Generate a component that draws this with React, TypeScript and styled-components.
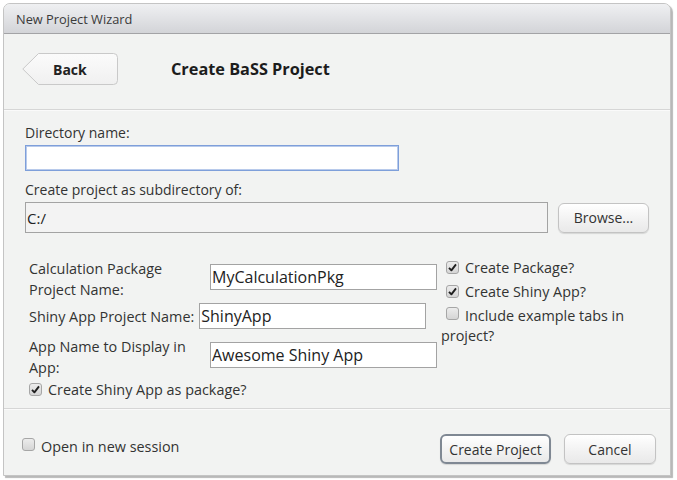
import React from "react";
import styled, { createGlobalStyle } from "styled-components";

const GlobalStyle = createGlobalStyle`
  html, body {
    margin: 0;
    padding: 0;
    background: #ffffff;
  }
  body {
    font-family: "Open Sans", "Noto Sans", sans-serif;
    color: #333;
  }
`;

const Page = styled.div`
  width: 677px;
  height: 480px;
  padding: 3px 0 0 3px;
  box-sizing: border-box;
`;

const Window = styled.div`
  width: 668px;
  height: 473px;
  display: flex;
  flex-direction: column;
  background: #f2f3f2;
  border: 1px solid #c4c4c4;
  border-radius: 7px 7px 0 0;
  box-shadow: 2px 2px 1px rgba(0, 0, 0, 0.28);
  box-sizing: border-box;
  overflow: hidden;
`;

const TitleBar = styled.div`
  height: 30px;
  flex: none;
  display: flex;
  align-items: center;
  padding-left: 12px;
  font-size: 12.8px;
  color: #3a3a3a;
  background: linear-gradient(#eff0f2, #d3d4d8);
  border-bottom: 1px solid #a3a3a6;
  box-sizing: border-box;
`;

const Header = styled.div`
  height: 76px;
  flex: none;
  display: flex;
  align-items: center;
  gap: 53px;
  padding: 0 0 5px 18px;
  border-bottom: 1px solid #d6d6d6;
  box-shadow: 0 1px 0 #fafafa;
  box-sizing: border-box;
`;

const BackButton = styled.button`
  position: relative;
  width: 96px;
  height: 32px;
  border: none;
  background: transparent;
  font-family: inherit;
  font-size: 14px;
  font-weight: 700;
  color: #222;
  text-align: left;
  padding: 0 0 0 31px;
  cursor: pointer;

  svg {
    position: absolute;
    left: 0;
    top: 0;
  }

  span {
    position: relative;
  }
`;

const Heading = styled.h1`
  margin: 0;
  font-size: 16.3px;
  font-weight: 700;
  color: #1c1c1c;
`;

const Content = styled.div`
  flex: none;
  height: 299px;
  padding: 14px 20px 0 21px;
  border-bottom: 1px solid #d6d6d6;
  box-shadow: 0 1px 0 #fafafa;
  box-sizing: border-box;
`;

const FieldLabel = styled.div`
  font-size: 14px;
  line-height: 18px;
  color: #333;
`;

const DirInput = styled.input`
  display: block;
  width: 374px;
  height: 26px;
  margin: 3px 0 10px;
  box-sizing: border-box;
  border: 1px solid #7e9fda;
  box-shadow: 0 0 0 1px rgba(126, 159, 218, 0.55) inset;
  background: #fff;
  outline: none;
`;

const PathRow = styled.div`
  display: flex;
  align-items: center;
  gap: 10px;
  margin-top: 3px;
`;

const PathBox = styled.div`
  width: 523px;
  height: 31px;
  box-sizing: border-box;
  border: 1px solid #a3a3a3;
  background: #f3f3f3;
  display: flex;
  align-items: center;
  padding-left: 1px;
  font-size: 15px;
  color: #222;
`;

const PushButton = styled.button<{ $primary?: boolean; $width: number }>`
  width: ${(p) => p.$width}px;
  height: 30px;
  border-radius: 6px;
  border: ${(p) => (p.$primary ? "2px solid #7f8893" : "1px solid #c3c3c3")};
  background: linear-gradient(#ffffff, #f1f1f1 60%, #e9e9e9);
  box-shadow: 0 1px 1px rgba(0, 0, 0, 0.12);
  font-family: inherit;
  font-size: 14px;
  color: #333;
  padding: 0;
  cursor: pointer;
`;

const Split = styled.div`
  display: flex;
  margin-top: 25px;
`;

const LeftCol = styled.div`
  width: 412px;
  padding-left: 4px;
`;

const FormRow = styled.div<{ $top: number }>`
  display: flex;
  align-items: flex-start;
  margin-top: ${(p) => p.$top}px;
`;

const RowLabel = styled.div<{ $width?: number; $offset?: number }>`
  width: ${(p) => (p.$width ? `${p.$width}px` : "auto")};
  flex: none;
  box-sizing: border-box;
  font-size: 14.4px;
  line-height: 21px;
  color: #333;
  padding-right: ${(p) => (p.$width ? 10 : 5)}px;
  margin-top: ${(p) => p.$offset ?? 0}px;
`;

const TextField = styled.div<{ $offset: number }>`
  width: 227px;
  height: 26px;
  margin-top: ${(p) => p.$offset}px;
  box-sizing: border-box;
  border: 1px solid #a3a3a3;
  background: #fff;
  display: flex;
  align-items: center;
  padding-left: 1px;
  font-size: 16px;
  color: #222;
  white-space: nowrap;
  overflow: hidden;
`;

const RightCol = styled.div`
  width: 200px;
`;

const CheckItem = styled.div<{ $indent?: number }>`
  font-size: 14.4px;
  line-height: 20px;
  margin-bottom: 4px;
  margin-left: ${(p) => p.$indent ?? 0}px;
  color: #333;
`;

const Box = styled.span<{ $gap?: number }>`
  display: inline-flex;
  align-items: center;
  justify-content: center;
  width: 13px;
  height: 13px;
  box-sizing: border-box;
  border: 1px solid #a6a6a6;
  border-radius: 3px;
  background: linear-gradient(#ececec, #d5d5d5);
  vertical-align: 1px;
  margin-left: ${(p) => p.$gap ?? 0}px;
  margin-right: 6px;

  svg {
    display: block;
  }
`;

const Footer = styled.div`
  flex: 1;
  display: flex;
  align-items: flex-start;
  justify-content: space-between;
  padding: 25px 14px 0 18px;
`;

const SessionCheck = styled.div`
  font-size: 14.4px;
  line-height: 20px;
  color: #333;
  margin-top: 3px;
`;

const FooterButtons = styled.div`
  display: flex;
  gap: 13px;
`;

const Check = ({ checked, gap }: { checked?: boolean; gap?: number }) => (
  <Box $gap={gap}>
    {checked && (
      <svg width="9" height="9" viewBox="0 0 9 9">
        <path d="M1 4.8 L3.4 7.3 L8 1.4" fill="none" stroke="#1f1f1f" strokeWidth="1.9" strokeLinejoin="round" />
      </svg>
    )}
  </Box>
);

const App = () => {
  return (
    <>
      <GlobalStyle />
      <Page>
        <Window>
          <TitleBar>New Project Wizard</TitleBar>
          <Header>
            <BackButton>
              <svg width="96" height="32" viewBox="0 0 96 32">
                <defs>
                  <linearGradient id="backFill" x1="0" y1="0" x2="0" y2="1">
                    <stop offset="0" stopColor="#fbfbfb" />
                    <stop offset="1" stopColor="#f0f0f0" />
                  </linearGradient>
                </defs>
                <path
                  d="M16.5 0.5 H91.5 Q95.5 0.5 95.5 4.5 V27.5 Q95.5 31.5 91.5 31.5 H16.5 L0.8 16 Z"
                  fill="url(#backFill)"
                  stroke="#c9c9c9"
                />
              </svg>
              <span>Back</span>
            </BackButton>
            <Heading>Create BaSS Project</Heading>
          </Header>

          <Content>
            <FieldLabel>Directory name:</FieldLabel>
            <DirInput />
            <FieldLabel>Create project as subdirectory of:</FieldLabel>
            <PathRow>
              <PathBox>C:/</PathBox>
              <PushButton $width={91}>Browse...</PushButton>
            </PathRow>

            <Split>
              <LeftCol>
                <FormRow $top={0}>
                  <RowLabel $width={181}>Calculation Package Project Name:</RowLabel>
                  <TextField $offset={6}>MyCalculationPkg</TextField>
                </FormRow>
                <FormRow $top={3}>
                  <RowLabel $offset={3}>Shiny App Project Name:</RowLabel>
                  <TextField $offset={0}>ShinyApp</TextField>
                </FormRow>
                <FormRow $top={7}>
                  <RowLabel $width={181}>App Name to Display in App:</RowLabel>
                  <TextField $offset={6}>Awesome Shiny App</TextField>
                </FormRow>
                <FormRow $top={2}>
                  <CheckItem>
                    <Check checked />
                    Create Shiny App as package?
                  </CheckItem>
                </FormRow>
              </LeftCol>
              <RightCol>
                <CheckItem $indent={5}>
                  <Check checked />
                  Create Package?
                </CheckItem>
                <CheckItem $indent={5}>
                  <Check checked />
                  Create Shiny App?
                </CheckItem>
                <CheckItem>
                  <Check gap={5} />
                  Include example tabs in project?
                </CheckItem>
              </RightCol>
            </Split>
          </Content>

          <Footer>
            <SessionCheck>
              <Check />
              Open in new session
            </SessionCheck>
            <FooterButtons>
              <PushButton $primary $width={111}>
                Create Project
              </PushButton>
              <PushButton $width={92}>Cancel</PushButton>
            </FooterButtons>
          </Footer>
        </Window>
      </Page>
    </>
  );
};

export default App;
